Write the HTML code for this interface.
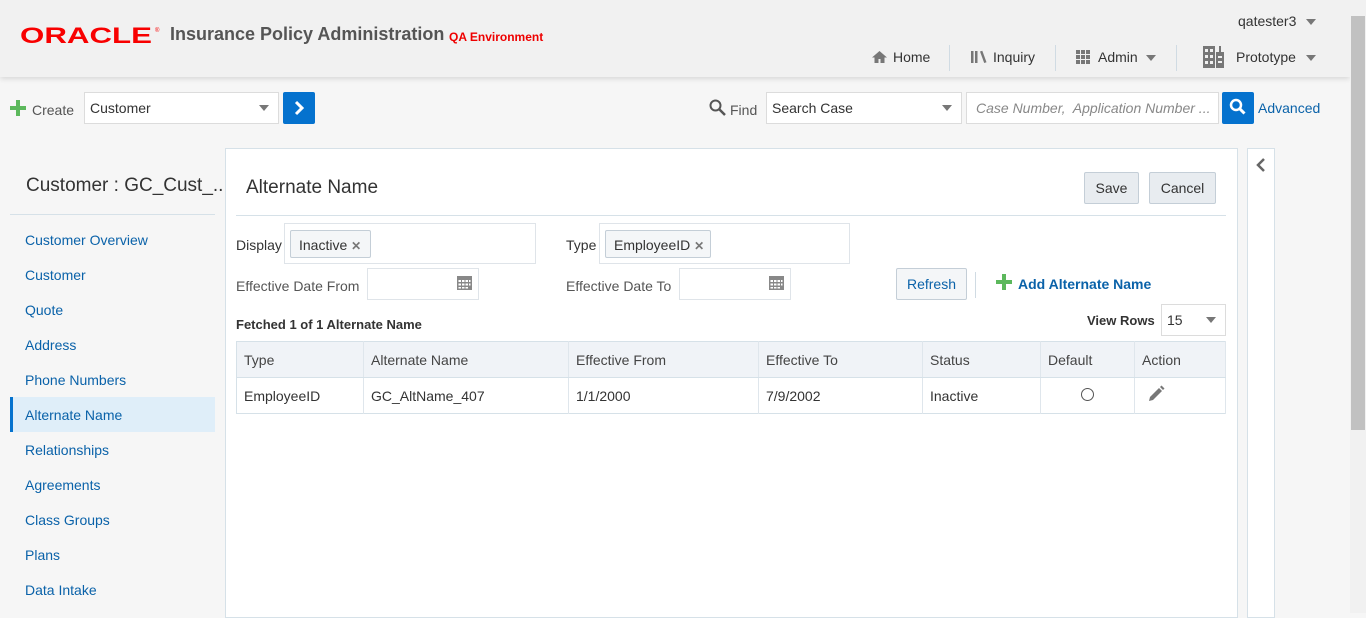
<!DOCTYPE html>
<html><head><meta charset="utf-8"><style>
*{box-sizing:border-box;margin:0;padding:0}
body{width:1366px;height:613px;overflow:hidden;background:#f6f6f6;font-family:"Liberation Sans",sans-serif;font-size:14px;color:#333;position:relative}
.a{position:absolute;white-space:nowrap}
.hdr{position:absolute;left:0;top:0;width:1350px;height:77px;background:#f1f1f1;box-shadow:0 2px 5px rgba(0,0,0,.12)}
.sel{position:absolute;background:#fff;border:1px solid #dcdcdc;height:32px;padding:7px 5px;color:#333;white-space:nowrap}
.car{position:absolute;width:0;height:0;border-left:5px solid transparent;border-right:5px solid transparent;border-top:6px solid #777}
.bbtn{position:absolute;width:32px;height:32px;background:#0572ce;border-radius:2px}
.nav{color:#0a62a9;left:25px}
.btn{position:absolute;border:1px solid #c4ced7;background:#e8ecf0;height:32px;text-align:center;padding-top:7px;color:#333;border-radius:2px}
.box{position:absolute;border:1px solid #dfe4e9;background:#fff}
.tag{position:absolute;border:1px solid #c4ced7;background:#f4f6f8;height:28px;padding:6px 8px;border-radius:2px;white-space:nowrap}
.sep{position:absolute;width:1px;background:#d0dbe3}
table{position:absolute;left:236px;top:341px;width:990px;border-collapse:collapse;border:1px solid #d6e1e8}
td,th{font-weight:normal;text-align:left;padding:0 7px;border-right:1px solid #dfe6ec;height:36px}
th{background:#f0f3f7;border-bottom:1px solid #d6e1e8;color:#444}
</style></head><body>
<div class="hdr"></div>
<svg class="a" style="left:20px;top:24px" width="142" height="22"><text x="0" y="19" font-family="Liberation Sans" font-size="22" font-weight="bold" fill="#f80000" textLength="132" lengthAdjust="spacingAndGlyphs">ORACLE</text><text x="135" y="8" font-size="6" fill="#f80000" font-family="Liberation Sans">®</text></svg>
<div class="a" style="left:170px;top:24px;font-size:18px;font-weight:bold;color:#555">Insurance Policy Administration</div>
<div class="a" style="left:449px;top:30px;font-size:12px;font-weight:bold;color:#e00">QA Environment</div>
<div class="a" style="left:1238px;top:13px;color:#333">qatester3</div><div class="car" style="left:1306px;top:19px"></div>
<svg class="a" style="left:871px;top:50px" width="17" height="14" viewBox="0 0 17 14"><path d="M8.5 1L1 7.5h2.5V13h4V9h2v4h4V7.5H16z" fill="#777"/></svg>
<div class="a" style="left:893px;top:49px">Home</div>
<div class="sep" style="left:949px;top:45px;height:26px"></div>
<svg class="a" style="left:971px;top:50px" width="16" height="14"><rect x="0" y="1" width="2.5" height="12" fill="#777"/><rect x="4" y="1" width="2.5" height="12" fill="#777"/><path d="M9 1.5l2.3-.8 4.2 11.5-2.3.8z" fill="#777"/></svg>
<div class="a" style="left:993px;top:49px">Inquiry</div>
<div class="sep" style="left:1055px;top:45px;height:26px"></div>
<svg class="a" style="left:1076px;top:50px" width="15" height="14"><g fill="#777"><rect x="0" y="0" width="4" height="4"/><rect x="5" y="0" width="4" height="4"/><rect x="10" y="0" width="4" height="4"/><rect x="0" y="5" width="4" height="4"/><rect x="5" y="5" width="4" height="4"/><rect x="10" y="5" width="4" height="4"/><rect x="0" y="10" width="4" height="4"/><rect x="5" y="10" width="4" height="4"/><rect x="10" y="10" width="4" height="4"/></g></svg>
<div class="a" style="left:1098px;top:49px">Admin</div><div class="car" style="left:1146px;top:55px"></div>
<div class="sep" style="left:1176px;top:45px;height:26px"></div>
<svg class="a" style="left:1203px;top:44px" width="21" height="24"><path d="M0 2h12v22H0zM13 8h3V2h2v6h3v16h-8z" fill="#777"/><g fill="#f1f1f1"><rect x="2" y="5" width="3" height="3"/><rect x="7" y="5" width="3" height="3"/><rect x="2" y="11" width="3" height="3"/><rect x="7" y="11" width="3" height="3"/><rect x="2" y="17" width="3" height="3"/><rect x="7" y="17" width="3" height="3"/><rect x="15" y="12" width="4" height="2"/><rect x="15" y="17" width="4" height="2"/></g></svg>
<div class="a" style="left:1236px;top:49px">Prototype</div><div class="car" style="left:1306px;top:55px"></div>
<div class="a" style="left:1350px;top:0;width:16px;height:613px;background:#f1f1f1"></div>
<div class="a" style="left:1351px;top:16px;width:14px;height:414px;background:#c1c1c1"></div>

<svg class="a" style="left:10px;top:100px" width="16" height="16"><path d="M6 0h4v6h6v4h-6v6H6v-6H0V6h6z" fill="#5cb85c"/></svg>
<div class="a" style="left:32px;top:102px;color:#555">Create</div>
<div class="sel" style="left:84px;top:92px;width:195px">Customer</div><div class="car" style="left:259px;top:105px"></div>
<div class="bbtn" style="left:283px;top:92px"><svg width="32" height="32"><path d="M13 10l6 6-6 6" stroke="#fff" stroke-width="3" fill="none"/></svg></div>
<svg class="a" style="left:709px;top:99px" width="18" height="18"><circle cx="6.5" cy="6.5" r="5" stroke="#555" stroke-width="2" fill="none"/><path d="M10 10l6 6" stroke="#555" stroke-width="2.5"/></svg>
<div class="a" style="left:730px;top:102px;color:#555">Find</div>
<div class="sel" style="left:766px;top:92px;width:196px">Search Case</div><div class="car" style="left:942px;top:105px"></div>
<div class="sel" style="left:966px;top:92px;width:253px;color:#888;font-style:italic;overflow:hidden;padding-left:9px">Case Number,&nbsp; Application Number ...</div>
<div class="bbtn" style="left:1222px;top:92px"><svg width="32" height="32"><circle cx="14" cy="13" r="5" stroke="#fff" stroke-width="2.5" fill="none"/><path d="M17.5 16.5l5 5" stroke="#fff" stroke-width="3"/></svg></div>
<div class="a" style="left:1258px;top:100px;color:#0a62a9">Advanced</div>

<div class="a" style="left:26px;top:175px;font-size:19px;color:#333">Customer : GC_Cust_...</div>
<div class="a" style="left:10px;top:214px;width:205px;height:1px;background:#d6e1e8"></div>
<div class="a nav" style="top:232px">Customer Overview</div>
<div class="a nav" style="top:267px">Customer</div>
<div class="a nav" style="top:302px">Quote</div>
<div class="a nav" style="top:337px">Address</div>
<div class="a nav" style="top:372px">Phone Numbers</div>
<div class="a" style="left:10px;top:397px;width:205px;height:35px;background:#dfeef9;border-left:3px solid #0572ce"></div>
<div class="a nav" style="top:407px">Alternate Name</div>
<div class="a nav" style="top:442px">Relationships</div>
<div class="a nav" style="top:477px">Agreements</div>
<div class="a nav" style="top:512px">Class Groups</div>
<div class="a nav" style="top:547px">Plans</div>
<div class="a nav" style="top:582px">Data Intake</div>

<div class="a" style="left:225px;top:148px;width:1013px;height:470px;background:#fff;border:1px solid #d6e1e8"></div>
<div class="a" style="left:1247px;top:148px;width:28px;height:470px;background:#fff;border:1px solid #d6e1e8"></div>
<svg class="a" style="left:1255px;top:157px" width="12" height="16"><path d="M9 2L3 8l6 6" stroke="#666" stroke-width="2.5" fill="none"/></svg>

<div class="a" style="left:246px;top:177px;font-size:19px;color:#333">Alternate Name</div>
<div class="btn" style="left:1084px;top:172px;width:55px">Save</div>
<div class="btn" style="left:1149px;top:172px;width:67px">Cancel</div>
<div class="a" style="left:236px;top:215px;width:990px;height:1px;background:#d6e1e8"></div>

<div class="a" style="left:236px;top:237px">Display</div>
<div class="box" style="left:284px;top:223px;width:252px;height:41px"></div>
<div class="tag" style="left:290px;top:230px;width:81px">Inactive <span style="color:#777;font-weight:bold;font-size:12px">✕</span></div>
<div class="a" style="left:566px;top:237px">Type</div>
<div class="box" style="left:599px;top:223px;width:251px;height:41px"></div>
<div class="tag" style="left:605px;top:230px;width:106px">EmployeeID <span style="color:#777;font-weight:bold;font-size:12px">✕</span></div>

<div class="a" style="left:236px;top:278px;color:#555">Effective Date From</div>
<div class="box" style="left:367px;top:268px;width:112px;height:32px"></div>
<svg class="a" style="left:457px;top:275px" width="15" height="15"><rect x="0" y="1" width="15" height="14" fill="#888"/><g fill="#fff"><rect x="1.5" y="5" width="2.5" height="2"/><rect x="5" y="5" width="2.5" height="2"/><rect x="8.5" y="5" width="2.5" height="2"/><rect x="12" y="5" width="1.5" height="2"/><rect x="1.5" y="8.5" width="2.5" height="2"/><rect x="5" y="8.5" width="2.5" height="2"/><rect x="8.5" y="8.5" width="2.5" height="2"/><rect x="12" y="8.5" width="1.5" height="2"/><rect x="1.5" y="12" width="2.5" height="1.5"/><rect x="5" y="12" width="2.5" height="1.5"/><rect x="8.5" y="12" width="2.5" height="1.5"/></g></svg>
<div class="a" style="left:566px;top:278px;color:#555">Effective Date To</div>
<div class="box" style="left:679px;top:268px;width:112px;height:32px"></div>
<svg class="a" style="left:769px;top:275px" width="15" height="15"><rect x="0" y="1" width="15" height="14" fill="#888"/><g fill="#fff"><rect x="1.5" y="5" width="2.5" height="2"/><rect x="5" y="5" width="2.5" height="2"/><rect x="8.5" y="5" width="2.5" height="2"/><rect x="12" y="5" width="1.5" height="2"/><rect x="1.5" y="8.5" width="2.5" height="2"/><rect x="5" y="8.5" width="2.5" height="2"/><rect x="8.5" y="8.5" width="2.5" height="2"/><rect x="12" y="8.5" width="1.5" height="2"/><rect x="1.5" y="12" width="2.5" height="1.5"/><rect x="5" y="12" width="2.5" height="1.5"/><rect x="8.5" y="12" width="2.5" height="1.5"/></g></svg>
<div class="btn" style="left:896px;top:268px;width:71px;background:#f4f6f8;color:#0a62a9">Refresh</div>
<div class="sep" style="left:975px;top:272px;height:26px"></div>
<svg class="a" style="left:996px;top:274px" width="16" height="16"><path d="M6 0h4v6h6v4h-6v6H6v-6H0V6h6z" fill="#5cb85c"/></svg>
<div class="a" style="left:1018px;top:276px;color:#0a62a9;font-weight:bold">Add Alternate Name</div>

<div class="a" style="left:236px;top:317px;font-weight:bold;font-size:13px">Fetched 1 of 1 Alternate Name</div>
<div class="a" style="left:1087px;top:313px;font-weight:bold;font-size:13px">View Rows</div>
<div class="sel" style="left:1161px;top:304px;width:65px">15</div><div class="car" style="left:1206px;top:317px"></div>

<table>
<tr><th style="width:127px">Type</th><th style="width:205px">Alternate Name</th><th style="width:190px">Effective From</th><th style="width:164px">Effective To</th><th style="width:118px">Status</th><th style="width:94px">Default</th><th>Action</th></tr>
<tr><td>EmployeeID</td><td>GC_AltName_407</td><td>1/1/2000</td><td>7/9/2002</td><td>Inactive</td><td style="text-align:center"><span style="display:inline-block;width:13px;height:13px;border:1px solid #555;border-radius:50%"></span></td><td><svg width="18" height="18" style="margin-left:5px"><path d="M2 16l1-4 9-9 3 3-9 9z" fill="#777"/><path d="M13 2l1.5-1.5 3 3L16 5z" fill="#777"/></svg></td></tr>
</table>
</body></html>
